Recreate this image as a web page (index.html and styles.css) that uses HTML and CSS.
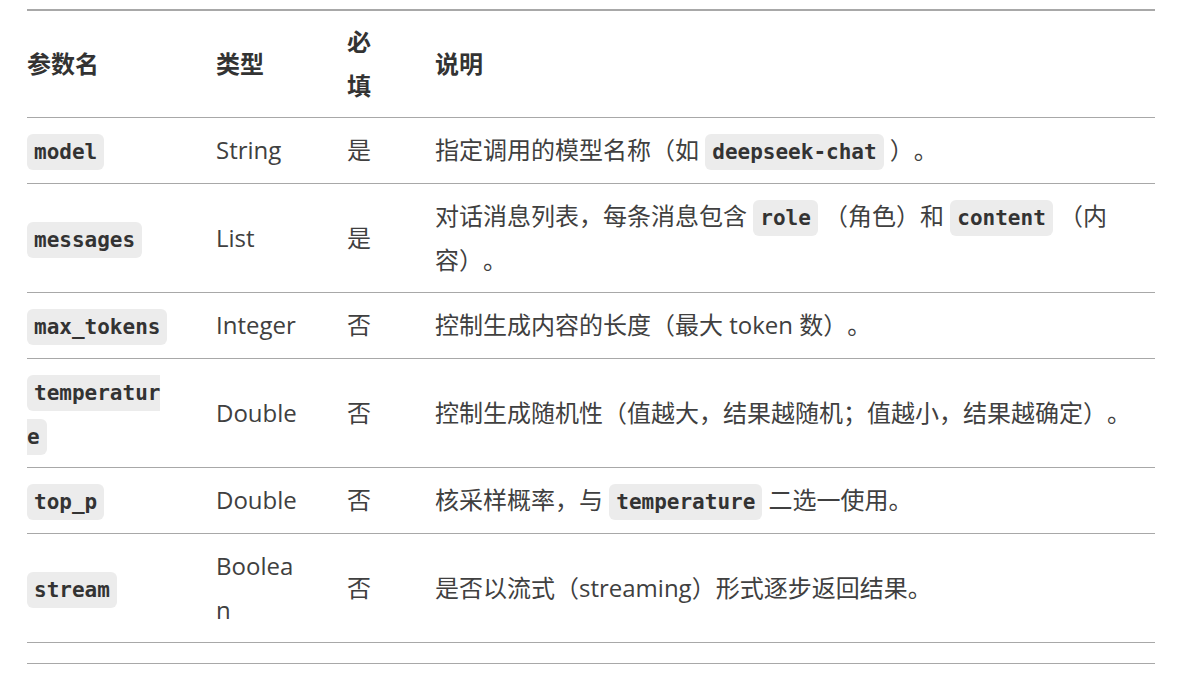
FILE: index.html
```html
<!DOCTYPE html>
<html lang="zh-CN">
<head>
<meta charset="utf-8">
<title>参数说明</title>
<link rel="stylesheet" href="styles.css">
</head>
<body>
<div class="page">
  <table class="params">
    <colgroup>
      <col class="c-name">
      <col class="c-type">
      <col class="c-req">
      <col class="c-desc">
    </colgroup>
    <thead>
      <tr>
        <th>参数名</th>
        <th>类型</th>
        <th>必填</th>
        <th>说明</th>
      </tr>
    </thead>
    <tbody>
      <tr>
        <td><code>model</code></td>
        <td>String</td>
        <td>是</td>
        <td>指定调用的模型名称（如 <code>deepseek-chat</code> ）。</td>
      </tr>
      <tr>
        <td><code>messages</code></td>
        <td>List</td>
        <td>是</td>
        <td>对话消息列表，每条消息包含 <code>role</code> （角色）和 <code>content</code> （内容）。</td>
      </tr>
      <tr>
        <td><code>max_tokens</code></td>
        <td>Integer</td>
        <td>否</td>
        <td>控制生成内容的长度（最大 token 数）。</td>
      </tr>
      <tr>
        <td><code>temperature</code></td>
        <td>Double</td>
        <td>否</td>
        <td>控制生成随机性（值越大，结果越随机；值越小，结果越确定）。</td>
      </tr>
      <tr>
        <td><code>top_p</code></td>
        <td>Double</td>
        <td>否</td>
        <td>核采样概率，与 <code>temperature</code> 二选一使用。</td>
      </tr>
      <tr>
        <td><code>stream</code></td>
        <td>Boolean</td>
        <td>否</td>
        <td>是否以流式（streaming）形式逐步返回结果。</td>
      </tr>
      <tr class="empty">
        <td></td>
        <td></td>
        <td></td>
        <td></td>
      </tr>
    </tbody>
  </table>
</div>
</body>
</html>
```

FILE: styles.css
```css
html, body {
  margin: 0;
  padding: 0;
  background: #ffffff;
}

body {
  font-family: "Open Sans", "Noto Sans CJK SC", sans-serif;
  font-size: 24px;
  line-height: 44px;
  color: #404040;
  text-spacing-trim: space-all;
}

.page {
  padding: 9px 42px 0 27px;
}

.params {
  width: 1128px;
  border-collapse: collapse;
  table-layout: fixed;
}

.c-name { width: 189px; }
.c-type { width: 131px; }
.c-req  { width: 88px; }
.c-desc { width: 720px; }

.params thead tr {
  border-top: 2px solid #a8a8a8;
}

.params tr {
  border-bottom: 1px solid #a8a8a8;
}

.params th,
.params td {
  text-align: left;
  vertical-align: middle;
  padding: 10.25px 45px 10.25px 0;
  overflow-wrap: anywhere;
}

.params th {
  font-weight: 700;
  color: #333333;
  padding-top: 9px;
  padding-bottom: 9px;
}

.params th:last-child,
.params td:last-child {
  padding-right: 0;
}

.params tr.empty td {
  padding: 10px 0;
}

code {
  font-family: "DejaVu Sans Mono", "Liberation Mono", monospace;
  font-size: 21px;
  line-height: 1;
  font-weight: 700;
  color: #333333;
  background: #ececec;
  border-radius: 6px;
  padding: 6px 7px;
}
```
